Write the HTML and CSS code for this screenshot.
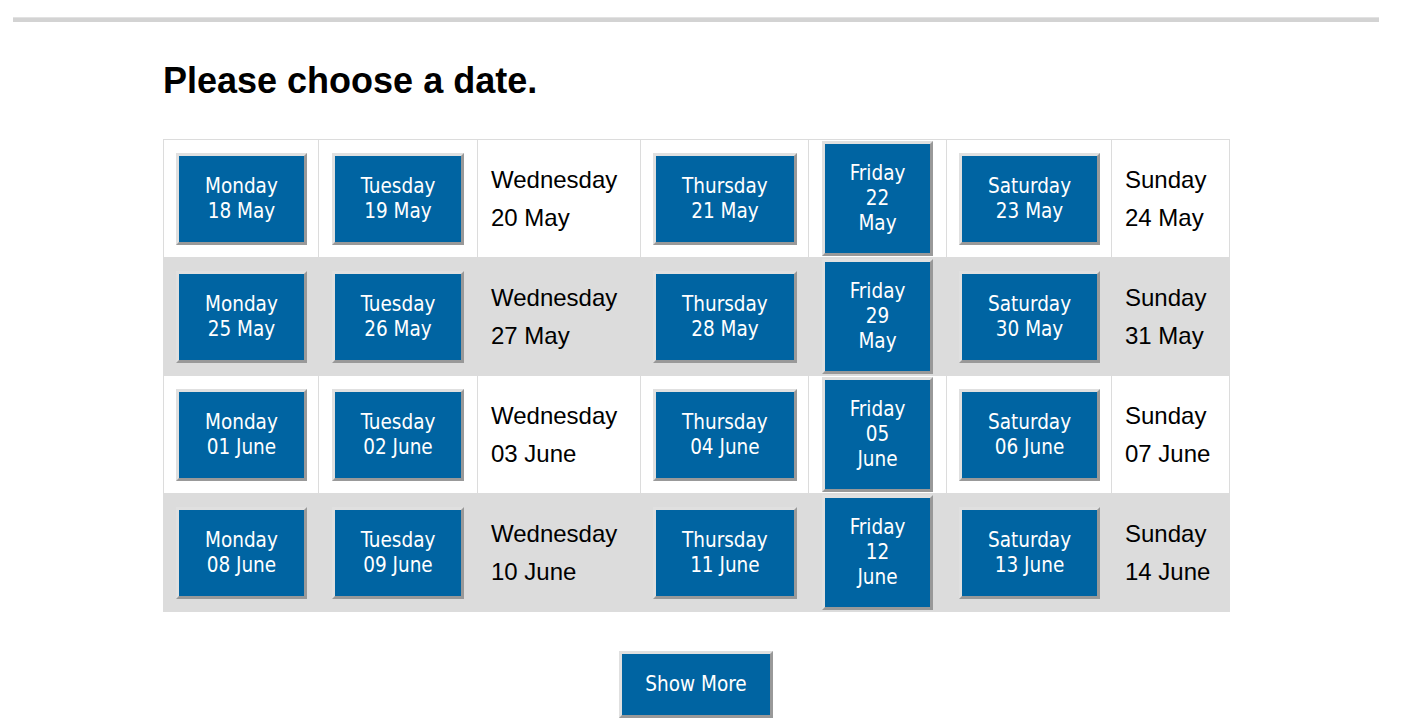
FILE: index.html
```html
<!DOCTYPE html>
<html lang="en">
<head>
<meta charset="utf-8">
<title>Please choose a date.</title>
<link rel="stylesheet" href="styles.css">
</head>
<body>
<div class="topbar"></div>
<main class="content">
  <h1 class="title">Please choose a date.</h1>
  <table class="dates">
    <colgroup>
      <col class="c1"><col class="c2"><col class="c3"><col class="c4"><col class="c5"><col class="c6"><col class="c7">
    </colgroup>
    <tbody>
      <tr>
        <td class="btn-cell"><button class="day-btn">Monday<br>18 May</button></td>
        <td class="btn-cell"><button class="day-btn">Tuesday<br>19 May</button></td>
        <td class="text-cell">Wednesday<br>20 May</td>
        <td class="btn-cell"><button class="day-btn">Thursday<br>21 May</button></td>
        <td class="btn-cell"><button class="day-btn fri">Friday<br>22<br>May</button></td>
        <td class="btn-cell"><button class="day-btn">Saturday<br>23 May</button></td>
        <td class="text-cell">Sunday<br>24 May</td>
      </tr>
      <tr class="alt">
        <td class="btn-cell"><button class="day-btn">Monday<br>25 May</button></td>
        <td class="btn-cell"><button class="day-btn">Tuesday<br>26 May</button></td>
        <td class="text-cell">Wednesday<br>27 May</td>
        <td class="btn-cell"><button class="day-btn">Thursday<br>28 May</button></td>
        <td class="btn-cell"><button class="day-btn fri">Friday<br>29<br>May</button></td>
        <td class="btn-cell"><button class="day-btn">Saturday<br>30 May</button></td>
        <td class="text-cell">Sunday<br>31 May</td>
      </tr>
      <tr>
        <td class="btn-cell"><button class="day-btn">Monday<br>01 June</button></td>
        <td class="btn-cell"><button class="day-btn">Tuesday<br>02 June</button></td>
        <td class="text-cell">Wednesday<br>03 June</td>
        <td class="btn-cell"><button class="day-btn">Thursday<br>04 June</button></td>
        <td class="btn-cell"><button class="day-btn fri">Friday<br>05<br>June</button></td>
        <td class="btn-cell"><button class="day-btn">Saturday<br>06 June</button></td>
        <td class="text-cell">Sunday<br>07 June</td>
      </tr>
      <tr class="alt">
        <td class="btn-cell"><button class="day-btn">Monday<br>08 June</button></td>
        <td class="btn-cell"><button class="day-btn">Tuesday<br>09 June</button></td>
        <td class="text-cell">Wednesday<br>10 June</td>
        <td class="btn-cell"><button class="day-btn">Thursday<br>11 June</button></td>
        <td class="btn-cell"><button class="day-btn fri">Friday<br>12<br>June</button></td>
        <td class="btn-cell"><button class="day-btn">Saturday<br>13 June</button></td>
        <td class="text-cell">Sunday<br>14 June</td>
      </tr>
    </tbody>
  </table>
  <div class="more-row">
    <button class="day-btn more-btn">Show More</button>
  </div>
</main>
</body>
</html>
```

FILE: styles.css
```css
html, body {
  margin: 0;
  padding: 0;
  background: #ffffff;
}

body {
  font-family: "Liberation Sans", Arial, sans-serif;
  color: #000;
}

.topbar {
  margin: 17px 27px 0 13px;
  height: 4px;
  background: #d3d3d3;
  border-top: 1px solid #e2e2e2;
}

.content {
  width: 1066px;
  margin: 0 0 0 163px;
}

.title {
  margin: 38px 0 0 0;
  font-size: 36px;
  line-height: 42px;
  font-weight: bold;
}

.dates {
  margin-top: 37px;
  width: 1066px;
  table-layout: fixed;
  border-collapse: collapse;
}

.c1 { width: 155px; }
.c2 { width: 159px; }
.c3 { width: 163px; }
.c4 { width: 168px; }
.c5 { width: 138px; }
.c6 { width: 165px; }
.c7 { width: 118px; }

.dates td {
  border: 1px solid #dcdcdc;
  height: 118px;
  padding: 0;
  vertical-align: middle;
  box-sizing: border-box;
}

.dates tr.alt td {
  background: #dcdcdc;
}

.btn-cell {
  text-align: center;
  padding: 0 12px !important;
}

.text-cell {
  padding-left: 13px !important;
  font-size: 24px;
  line-height: 38px;
  text-align: left;
}

.day-btn {
  display: inline-block;
  box-sizing: content-box;
  background: #0064a2;
  color: #ffffff;
  font-family: "DejaVu Sans Condensed", "DejaVu Sans", sans-serif;
  font-stretch: condensed;
  font-size: 20.5px;
  line-height: 25px;
  padding: 18px 26px;
  margin: 0;
  border: 3px solid;
  border-color: #e0e0e0 #999999 #999999 #e0e0e0;
  cursor: pointer;
  text-align: center;
}

.day-btn.fri {
  width: 111px;
  padding: 17px 4px;
  box-sizing: border-box;
}

.more-row {
  display: flex;
  justify-content: center;
  margin-top: 39px;
}

.more-btn {
  padding: 18px 23px;
}
```
